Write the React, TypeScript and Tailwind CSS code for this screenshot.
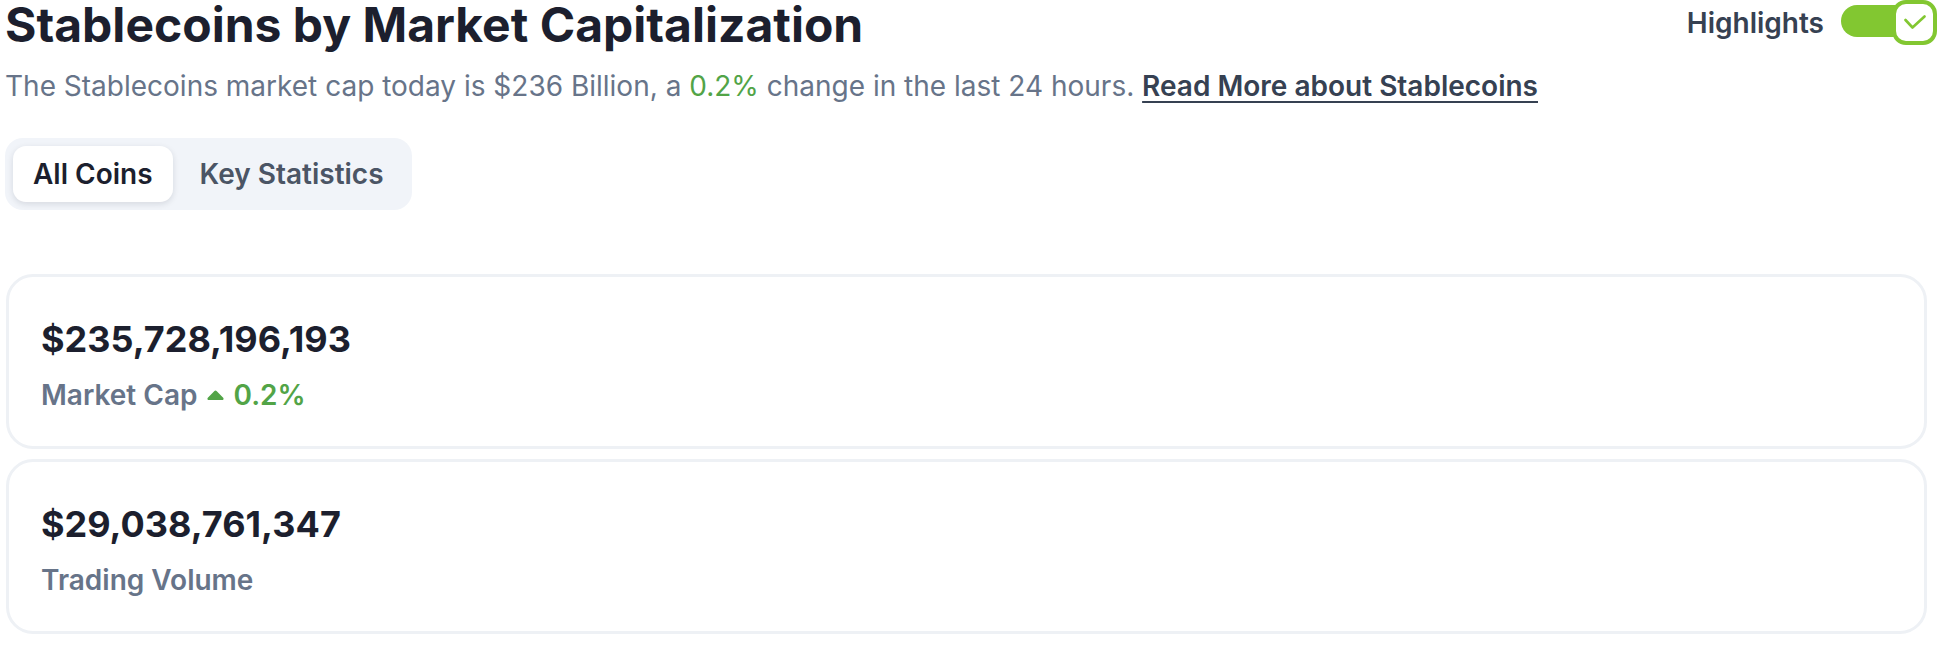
import React, { useState } from 'react';

const StatCard: React.FC<{ value: string; label: string; change?: string }> = ({ value, label, change }) => (
  <div className="rounded-[27px] border-[3px] border-[#eef1f5] bg-white pl-[32px] pt-[40px] pb-[33px]">
    <div className="text-[36px] leading-[44px] font-bold text-[#1c1f2e]">{value}</div>
    <div className="mt-[16px] flex items-center text-[28px] leading-[36px] font-semibold">
      <span className="text-[#677489]">{label}</span>
      {change && (
        <>
          <svg className="ml-[10px] mr-[9px]" width="17" height="10" viewBox="0 0 17 10" aria-hidden="true">
            <path d="M7.2 1.2a1.8 1.8 0 0 1 2.6 0l6.4 6.6c.8.8.2 2.2-.9 2.2H1.7C.6 10 0 8.6.8 7.8z" fill="#52a447" />
          </svg>
          <span className="text-[#52a447]">{change}</span>
        </>
      )}
    </div>
  </div>
);

const HighlightsToggle: React.FC = () => {
  const [on, setOn] = useState(true);
  return (
    <div className="flex items-center gap-[17px]">
      <span className="text-[28px] leading-[36px] font-semibold text-[#364152]">Highlights</span>
      <button
        onClick={() => setOn(!on)}
        className="relative w-[96px] h-[45px]"
        aria-pressed={on}
      >
        <span className={`absolute left-0 top-[5px] h-[32px] w-[90px] rounded-full ${on ? 'bg-[#82c731]' : 'bg-[#e3e8ef]'}`} />
        <span className={`absolute right-0 top-0 flex h-[45px] w-[45px] items-center justify-center rounded-[14px] border-[4px] bg-white ${on ? 'border-[#82c731]' : 'border-[#e3e8ef]'}`}>
          {on && (
            <svg width="24" height="16" viewBox="0 0 24 16" fill="none" aria-hidden="true">
              <path d="M2.5 5 L9.5 12.5 L21.5 1.5" stroke="#82c731" strokeWidth="2.6" strokeLinecap="round" strokeLinejoin="round" />
            </svg>
          )}
        </span>
      </button>
    </div>
  );
};

export default function App() {
  const [tab, setTab] = useState('all');

  return (
    <div className="min-h-screen bg-white pl-[5px] pr-[5px] font-['Inter',sans-serif]">
      <div className="flex items-start justify-between">
        <div>
          <h1 className="text-[48px] leading-[50px] font-bold text-[#1c1f2e]">
            Stablecoins by Market Capitalization
          </h1>
          <p className="mt-[18px] text-[28px] leading-[36px] text-[#677489]">
            The Stablecoins market cap today is $236 Billion, a <span className="text-[#52a447]">0.2%</span> change in the last 24 hours.{' '}
            <a href="#" className="font-semibold text-[#364152] underline underline-offset-[5px] decoration-[2px]">
              Read More about Stablecoins
            </a>
          </p>
        </div>
        <HighlightsToggle />
      </div>

      <div className="mt-[34px] inline-flex gap-[7px] rounded-[18px] bg-[#f1f4f9] p-[8px]">
        <button
          onClick={() => setTab('all')}
          className={`rounded-[13px] px-[20px] text-[28px] leading-[56px] font-semibold ${tab === 'all' ? 'bg-white text-[#1c1f2e] shadow-[0_2px_6px_rgba(16,24,40,0.12)]' : 'text-[#4b5565]'}`}
        >
          All Coins
        </button>
        <button
          onClick={() => setTab('key')}
          className={`rounded-[13px] px-[20px] text-[28px] leading-[56px] font-semibold ${tab === 'key' ? 'bg-white text-[#1c1f2e] shadow-[0_2px_6px_rgba(16,24,40,0.12)]' : 'text-[#4b5565]'}`}
        >
          Key Statistics
        </button>
      </div>

      <div className="mt-[64px] mr-[10px] ml-px flex flex-col gap-[10px]">
        <StatCard value="$235,728,196,193" label="Market Cap" change="0.2%" />
        <StatCard value="$29,038,761,347" label="Trading Volume" />
      </div>
    </div>
  );
}
